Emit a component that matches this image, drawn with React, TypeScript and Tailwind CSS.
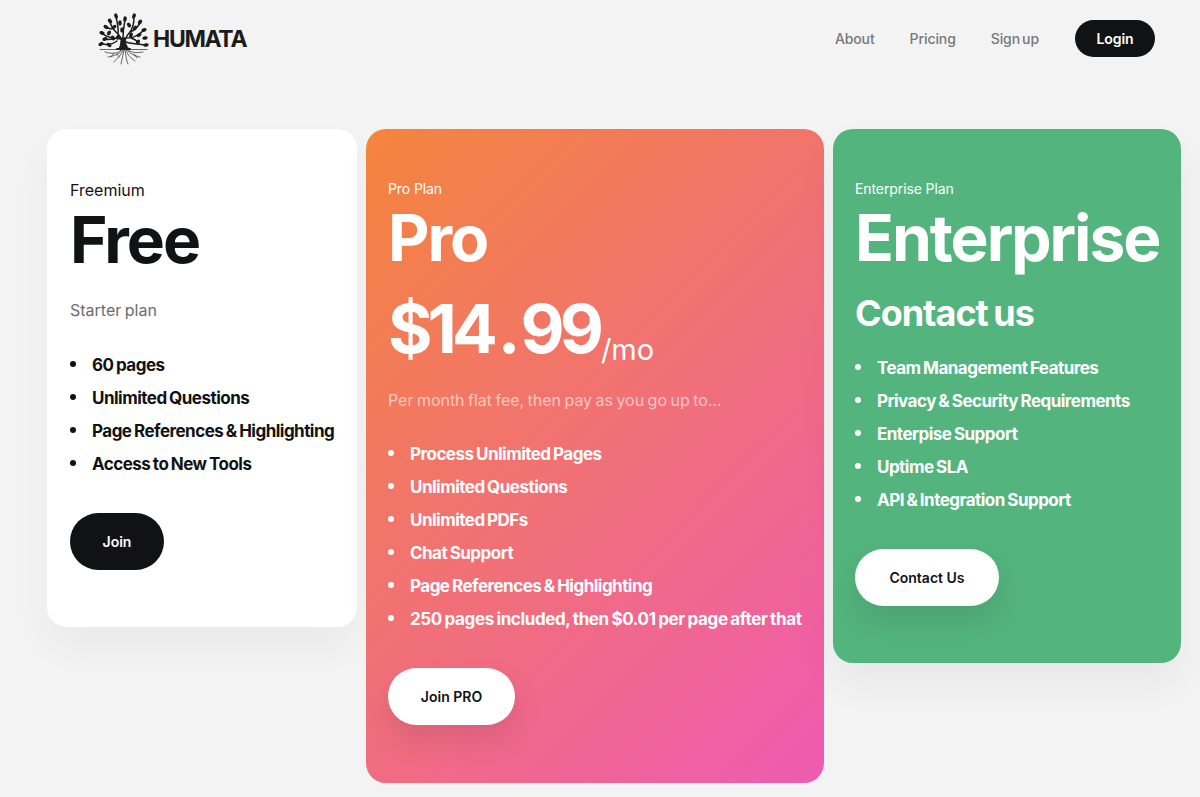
import React from 'react';

const font = { fontFamily: 'Inter' };

const leaves: [number, number, number][] = [
  [18, 5, -20], [27, 8, 10], [36, 5, 20], [12, 10, -40], [22, 12, 0], [42, 11, 40], [8, 16, -60], [16, 16, 60], [31, 14, -30],
  [37, 17, 30], [46, 19, 70], [4, 22, -70], [11, 22, 30], [24, 19, 0], [41, 24, 60], [47, 27, 80], [7, 28, 70], [15, 27, -40],
  [33, 24, 20], [3, 33, 60], [11, 34, -60], [40, 31, 30], [48, 34, 80], [20, 26, 40],
];

const TreeLogo = () => (
  <svg width="52" height="54" viewBox="0 0 52 54" fill="none" stroke="#1c1c1c" strokeLinecap="round">
    <path d="M25 38 C25 31 24 27 20 23 C17 20 14 18 12 11 M25 38 C26 30 28 25 32 21 C35 17 36 11 36 6 M23 28 C18 27 11 28 5 23 M27 27 C32 27 38 27 45 20 M32 21 C35 20 39 17 42 12 M20 23 C21 17 19 11 18 6 M25 27 C25 20 26 14 27 9 M19 30 C15 33 9 34 4 33 M28 31 C34 33 41 33 48 34 M14 18 C12 18 10 17 8 16 M33 27 C36 28 38 29 40 31 M16 28 C12 28 9 29 7 28" strokeWidth="1.5" />
    <path d="M21 38 C23 34 23 30 23 27 L27 27 C27 31 28 35 31 38 Z" fill="#1c1c1c" strokeWidth="1" />
    <g fill="#1c1c1c" stroke="none">
      {leaves.map(([x, y, r]) => (
        <ellipse key={`${x}-${y}`} cx={x} cy={y} rx="1.8" ry="2.7" transform={`rotate(${r} ${x} ${y})`} />
      ))}
    </g>
    <path d="M2 38.5 H49" strokeWidth="0.9" stroke="#555" />
    <path d="M19 38 H32" strokeWidth="2" />
    <path d="M23 39 C20 43 14 43 7 41 M24 39 C21 44 15 45 10 46 M25 39 C23 45 19 47 16 51 M26 39 C25 44 24 48 23 53 M27 39 C28 44 28 49 30 53 M28 39 C30 45 33 47 37 50 M29 39 C32 43 37 45 42 46 M30 39 C34 42 39 42 45 41 M16 42 L13 46 M36 43 L39 47 M21 46 L19 43" strokeWidth="0.8" stroke="#444" />
  </svg>
);

type Plan = {
  tag: string;
  title: string;
  items: string[];
  cta: string;
};

const Bullets = ({ items, dot }: { items: string[]; dot: string }) => (
  <ul className="flex flex-col gap-[8px]">
    {items.map((item) => (
      <li
        key={item}
        className={`flex items-center h-[25px] text-[17px] font-bold [word-spacing:-1px] whitespace-nowrap ${
          item.startsWith('250') ? 'tracking-[-0.38px]' : 'tracking-[-0.52px]'
        }`}
      >
        <span className={`w-[6px] h-[6px] shrink-0 rounded-full mr-[16px] mb-[3px] ${dot}`} />
        {item}
      </li>
    ))}
  </ul>
);

const free: Plan = {
  tag: 'Freemium',
  title: 'Free',
  items: ['60 pages', 'Unlimited Questions', 'Page References & Highlighting', 'Access to New Tools'],
  cta: 'Join',
};

const pro: Plan = {
  tag: 'Pro Plan',
  title: 'Pro',
  items: [
    'Process Unlimited Pages',
    'Unlimited Questions',
    'Unlimited PDFs',
    'Chat Support',
    'Page References & Highlighting',
    '250 pages included, then $0.01 per page after that',
  ],
  cta: 'Join PRO',
};

const enterprise: Plan = {
  tag: 'Enterprise Plan',
  title: 'Enterprise',
  items: [
    'Team Management Features',
    'Privacy & Security Requirements',
    'Enterpise Support',
    'Uptime SLA',
    'API & Integration Support',
  ],
  cta: 'Contact Us',
};

export default function App() {
  return (
    <div className="w-[1200px] h-[797px] overflow-hidden bg-[#f3f3f3] text-[#111214]" style={font}>
      <header className="h-[76px] flex items-center justify-between pl-[98px] pr-[45px]">
        <div className="flex items-center gap-[3px]">
          <TreeLogo />
          <span className="text-[23px] font-bold tracking-[-1.3px] text-[#1c1c1c] mt-[2px]">HUMATA</span>
        </div>
        <nav className="flex items-center text-[14px] font-medium text-[#77787a] tracking-[-0.1px] [word-spacing:-1.5px]">
          <a className="mr-[35px]">About</a>
          <a className="mr-[35px]">Pricing</a>
          <a className="mr-[36px]">Sign up</a>
          <button className="w-[80px] h-[37px] rounded-full bg-[#111214] text-white font-semibold">Login</button>
        </nav>
      </header>

      <main className="flex items-start gap-[9px] pl-[47px] pt-[53px]">
        <section className="w-[310px] h-[498px] rounded-[20px] bg-white px-[23px] pt-[50px] shadow-[0_20px_40px_rgba(0,0,0,0.04)]">
          <div className="text-[16px] leading-[22px]">{free.tag}</div>
          <h2 className="text-[64px] leading-[72px] font-bold tracking-[-2px] mt-[3px]">{free.title}</h2>
          <p className="mt-[22px] text-[16px] leading-[24px] text-[#6b6c6e] [word-spacing:-1px]">Starter plan</p>
          <div className="mt-[31px]">
            <Bullets items={free.items} dot="bg-[#111214]" />
          </div>
          <button className="mt-[36px] w-[94px] h-[57px] rounded-full bg-[#111214] text-white text-[14px] font-semibold">
            {free.cta}
          </button>
        </section>

        <section className="w-[458px] h-[654px] rounded-[20px] bg-[linear-gradient(135deg,#f4853c,#ee5bb2)] text-white px-[22px] pt-[50px]">
          <div className="text-[14px] leading-[20px] tracking-[-0.1px]">{pro.tag}</div>
          <h2 className="text-[64px] leading-[72px] font-bold tracking-[-2px] mt-[3px]">{pro.title}</h2>
          <div className="mt-[14px] h-[80px] whitespace-nowrap">
            <span className="text-[68px] leading-[80px] font-bold tracking-[-5px]">
              $14<span className="mx-[5px]">.</span>99
            </span>
            <span className="text-[29px] font-normal ml-[2px] align-[-7px]">/mo</span>
          </div>
          <p className="mt-[20px] text-[16px] leading-[24px] text-white/60 tracking-[-0.02px] [word-spacing:-1px]">
            Per month flat fee, then pay as you go up to...
          </p>
          <div className="mt-[30px]">
            <Bullets items={pro.items} dot="bg-white" />
          </div>
          <button className="mt-[36px] w-[127px] h-[57px] rounded-full bg-white text-[#111214] text-[14px] font-semibold shadow-[0_15px_30px_rgba(0,0,0,0.1)]">
            {pro.cta}
          </button>
        </section>

        <section className="w-[348px] h-[534px] rounded-[20px] bg-[#53b47d] text-white px-[22px] pt-[50px] shadow-[0_20px_40px_rgba(0,0,0,0.05)]">
          <div className="text-[14px] leading-[20px] tracking-[-0.1px]">{enterprise.tag}</div>
          <h2 className="text-[64px] leading-[72px] font-bold tracking-[-2px] mt-[3px]">{enterprise.title}</h2>
          <div className="text-[36px] leading-[44px] font-bold tracking-[-1px] [word-spacing:-2px] mt-[17px]">Contact us</div>
          <div className="mt-[21px]">
            <Bullets items={enterprise.items} dot="bg-white" />
          </div>
          <button className="mt-[36px] w-[144px] h-[57px] rounded-full bg-white text-[#111214] text-[14px] font-semibold shadow-[0_15px_30px_rgba(0,0,0,0.1)]">
            {enterprise.cta}
          </button>
        </section>
      </main>
    </div>
  );
}
